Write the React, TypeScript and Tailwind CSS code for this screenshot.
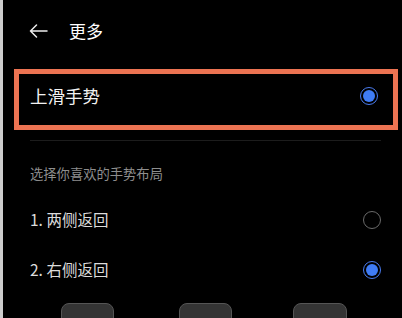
import React from "react";

const font = { fontFamily: '"Noto Sans CJK SC", "Noto Sans", sans-serif' };

const Radio = ({ checked }: { checked: boolean }) =>
  checked ? (
    <span className="flex h-[18px] w-[18px] items-center justify-center rounded-full border-[1.5px] border-[#4a7cf0]">
      <span className="h-[12px] w-[12px] rounded-full bg-[#3f7cf6]" />
    </span>
  ) : (
    <span className="block h-[18px] w-[18px] rounded-full border-[1.5px] border-[#6a6a6a]" />
  );

const options = [
  { label: "1. 两侧返回", checked: false, h: "h-[48px]" },
  { label: "2. 右侧返回", checked: true, h: "h-[52px]" },
];

export default function App() {
  return (
    <div
      className="h-[318px] w-[402px] overflow-hidden border-l-[3px] border-[#cdcdcd] bg-black"
      style={font}
    >
      {/* header */}
      <div className="flex h-[61px] items-center pl-[26px]">
        <svg width="19" height="14" viewBox="0 0 19 14" fill="none" className="text-[#eeeeee]">
          <path d="M18 7H1.5M7.5 1L1.5 7l6 6" stroke="currentColor" strokeWidth="1.5" strokeLinecap="round" strokeLinejoin="round" />
        </svg>
        <span className="ml-[21px] text-[17px] leading-none text-white">更多</span>
      </div>

      {/* highlighted option */}
      <div className="ml-[11px] mr-[4px] mt-[8px] flex h-[61px] items-center justify-between border-[5px] border-[#ec7352] pb-[7px] pl-[11px] pr-[15px]">
        <span className="text-[17.5px] leading-none text-[#f2f2f2]">上滑手势</span>
        <Radio checked />
      </div>

      <div className="ml-[27px] mr-[21px] mt-[10px] h-px bg-[#1c1c1c]" />

      <div className="flex h-[55px] items-center pl-[27px] pt-[11px]">
        <span className="text-[13.3px] leading-none text-[#8e8e8e]">选择你喜欢的手势布局</span>
      </div>

      {options.map((o) => (
        <div key={o.label} className={`flex items-center justify-between pl-[27px] pr-[21px] ${o.h}`}>
          <span className="text-[15.5px] leading-none text-[#dcdcdc]">{o.label}</span>
          <Radio checked={o.checked} />
        </div>
      ))}

      {/* gesture previews */}
      <div className="mt-[7px] flex pl-[58px]">
        <div className="h-[40px] w-[53px] rounded-[8px] border border-[#555] bg-[#343434]" />
        <div className="ml-[65px] h-[40px] w-[53px] rounded-[8px] border border-[#555] bg-[#343434]" />
        <div className="ml-[61px] h-[40px] w-[54px] rounded-[8px] border border-[#555] bg-[#343434]" />
      </div>
    </div>
  );
}
